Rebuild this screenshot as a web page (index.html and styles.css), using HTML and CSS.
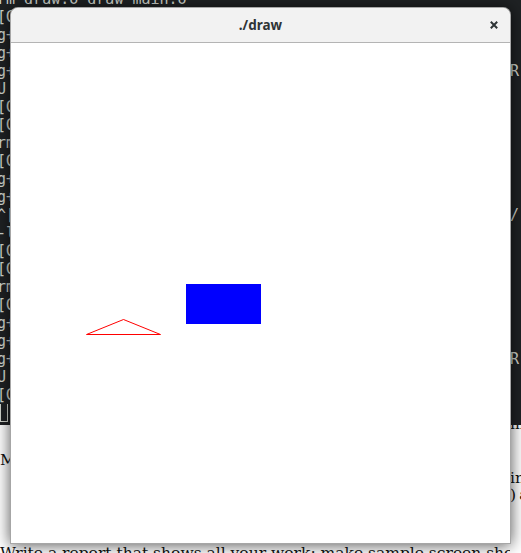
FILE: index.html
```html
<!DOCTYPE html>
<html>
<head>
<meta charset="utf-8">
<title>./draw</title>
<link rel="stylesheet" href="styles.css">
</head>
<body>
<div class="desk">
  <div class="term">
    <div class="tl first"><span>rm draw.o draw_main.o</span><span></span></div>
    <div class="tl"><span>[GCC] draw.cpp</span><span></span></div>
    <div class="tl"><span>g++ -c -Wall -g draw.cpp -o draw.o</span><span></span></div>
    <div class="tl"><span>g++ -c -Wall -g draw_main.cpp -o draw_main.o</span><span></span></div>
    <div class="tl"><span>g++ -o draw draw.o draw_main.o `pkg-config --libs gtk+-3.0` -DERROR</span><span>R(</span></div>
    <div class="tl"><span>U  draw.o</span><span></span></div>
    <div class="tl"><span>[GCC] draw_main.cpp</span><span></span></div>
    <div class="tl"><span>[GCC] link</span><span></span></div>
    <div class="tl"><span>rm draw.o draw_main.o</span><span></span></div>
    <div class="tl"><span>[GCC] draw.cpp</span><span></span></div>
    <div class="tl"><span>g++ -c -Wall -g draw.cpp -o draw.o</span><span></span></div>
    <div class="tl"><span>g++ -c -Wall -g draw_main.cpp -o draw_main.o</span><span></span></div>
    <div class="tl"><span>^[[A ./draw  /usr/include/gtk-3.0/gtk/gtkwidget.h  /usr/include/gtk/</span><span>/:</span></div>
    <div class="tl"><span>-lgtk-3 -lgdk-3 -lcairo</span><span></span></div>
    <div class="tl"><span>[GCC] draw_main.cpp</span><span></span></div>
    <div class="tl"><span>[GCC] link</span><span></span></div>
    <div class="tl"><span>rm draw.o draw_main.o</span><span></span></div>
    <div class="tl"><span>[GCC] draw.cpp</span><span></span></div>
    <div class="tl"><span>g++ -c -Wall -g draw.cpp -o draw.o</span><span></span></div>
    <div class="tl"><span>g++ -c -Wall -g draw_main.cpp -o draw_main.o</span><span></span></div>
    <div class="tl"><span>g++ -o draw draw.o draw_main.o `pkg-config --libs gtk+-3.0` -DERROR</span><span>R(</span></div>
    <div class="tl"><span>U  draw.o</span><span></span></div>
    <div class="tl"><span>[GCC] link</span><span></span></div>
    <div class="tl"><span><span class="cursor"></span></span><span></span></div>
  </div>
  <div class="doc">
    <div class="dl d0"><span class="ind">draw the shapes with the functions given in the program; a line, a rectangle and a form</span><span>m</span></div>
    <div class="dl d1"><span>Modify the program</span><span></span></div>
    <div class="dl d2"><span class="ind">Use the mouse to place each shape in the window, then draw the outline of the triangle in</span><span>in</span></div>
    <div class="dl d3"><span class="ind">red and the rectangle filled in blue (see the figure above) and check that both appear</span><span>)&#8201;a</span></div>
    <div class="dl d4"><span>Write a report that shows all your work; make sample screen shots</span><span></span></div>
  </div>
  <div class="win">
    <div class="titlebar">
      <span></span>
      <span class="title">./draw</span>
      <span class="close">
        <svg class="close-icon" width="8" height="8" viewBox="0 0 8 8">
          <path d="M0.8 0.8 L7.2 7.2 M7.2 0.8 L0.8 7.2" stroke="#2e3436" stroke-width="2" stroke-linecap="butt" fill="none"/>
        </svg>
      </span>
    </div>
    <svg class="canvas" width="499" height="500" viewBox="0 0 499 500">
      <rect x="175" y="241" width="75" height="40" fill="#0000ff"/>
      <polygon points="75.5,291.5 112.5,276.5 149.5,291.5" fill="none" stroke="#ff0000" stroke-width="1"/>
    </svg>
  </div>
</div>
</body>
</html>
```

FILE: styles.css
```css
html, body {
  margin: 0;
  padding: 0;
}

body {
  width: 521px;
  height: 553px;
  overflow: hidden;
  background: #ffffff;
}

.desk {
  position: relative;
  width: 521px;
  height: 553px;
  overflow: hidden;
}

.term {
  height: 425px;
  background: #1f2224;
  color: #d3d7cf;
  font-family: "DejaVu Sans Mono", monospace;
  font-size: 15px;
  line-height: 18px;
  overflow: hidden;
}

.tl {
  display: grid;
  grid-template-columns: 513px 1fr;
  margin-left: -3px;
  height: 18px;
  white-space: pre;
}

.tl > span {
  overflow: hidden;
}

.tl.first {
  margin-top: -10px;
}

.cursor {
  display: inline-block;
  box-sizing: border-box;
  width: 8px;
  height: 20px;
  margin-left: 3px;
  margin-top: -2px;
  border: 1px solid #d3d7cf;
  vertical-align: top;
}

.doc {
  height: 128px;
  overflow: hidden;
  background: #ffffff;
  color: #111111;
  font-family: "DejaVu Serif", serif;
  font-size: 15.5px;
  line-height: 17px;
}

.dl {
  display: grid;
  grid-template-columns: 510px 1fr;
  height: 17px;
  white-space: pre;
}

.dl > span {
  overflow: hidden;
}

.ind {
  padding-left: 24px;
}

.d0 { margin-top: -9px; }
.d1 { margin-top: 19px; }
.d2 { margin-top: 1px; }
.d3 { margin-top: 0; }
.d4 { margin-top: 41px; }

.win {
  position: absolute;
  left: 10px;
  top: 7px;
  width: 501px;
  height: 537px;
  box-sizing: border-box;
  border: 1px solid rgba(0, 0, 0, 0.35);
  border-radius: 8px 8px 0 0;
  background: #ffffff;
  box-shadow: 0 1px 16px rgba(0, 0, 0, 0.68);
  display: flex;
  flex-direction: column;
  overflow: hidden;
}

.titlebar {
  height: 34px;
  flex: none;
  display: grid;
  grid-template-columns: 1fr auto 1fr;
  align-items: center;
  background: #f2f2f2;
  border-bottom: 1px solid #b4b4b4;
  border-radius: 7px 7px 0 0;
}

.title {
  font-family: "Noto Sans", sans-serif;
  font-weight: bold;
  font-size: 13.5px;
  color: #2e3436;
}

.close {
  justify-self: end;
  display: flex;
  margin-right: 12px;
}

.close-icon {
  display: block;
}

.canvas {
  display: block;
  flex: none;
  background: #ffffff;
}
```
